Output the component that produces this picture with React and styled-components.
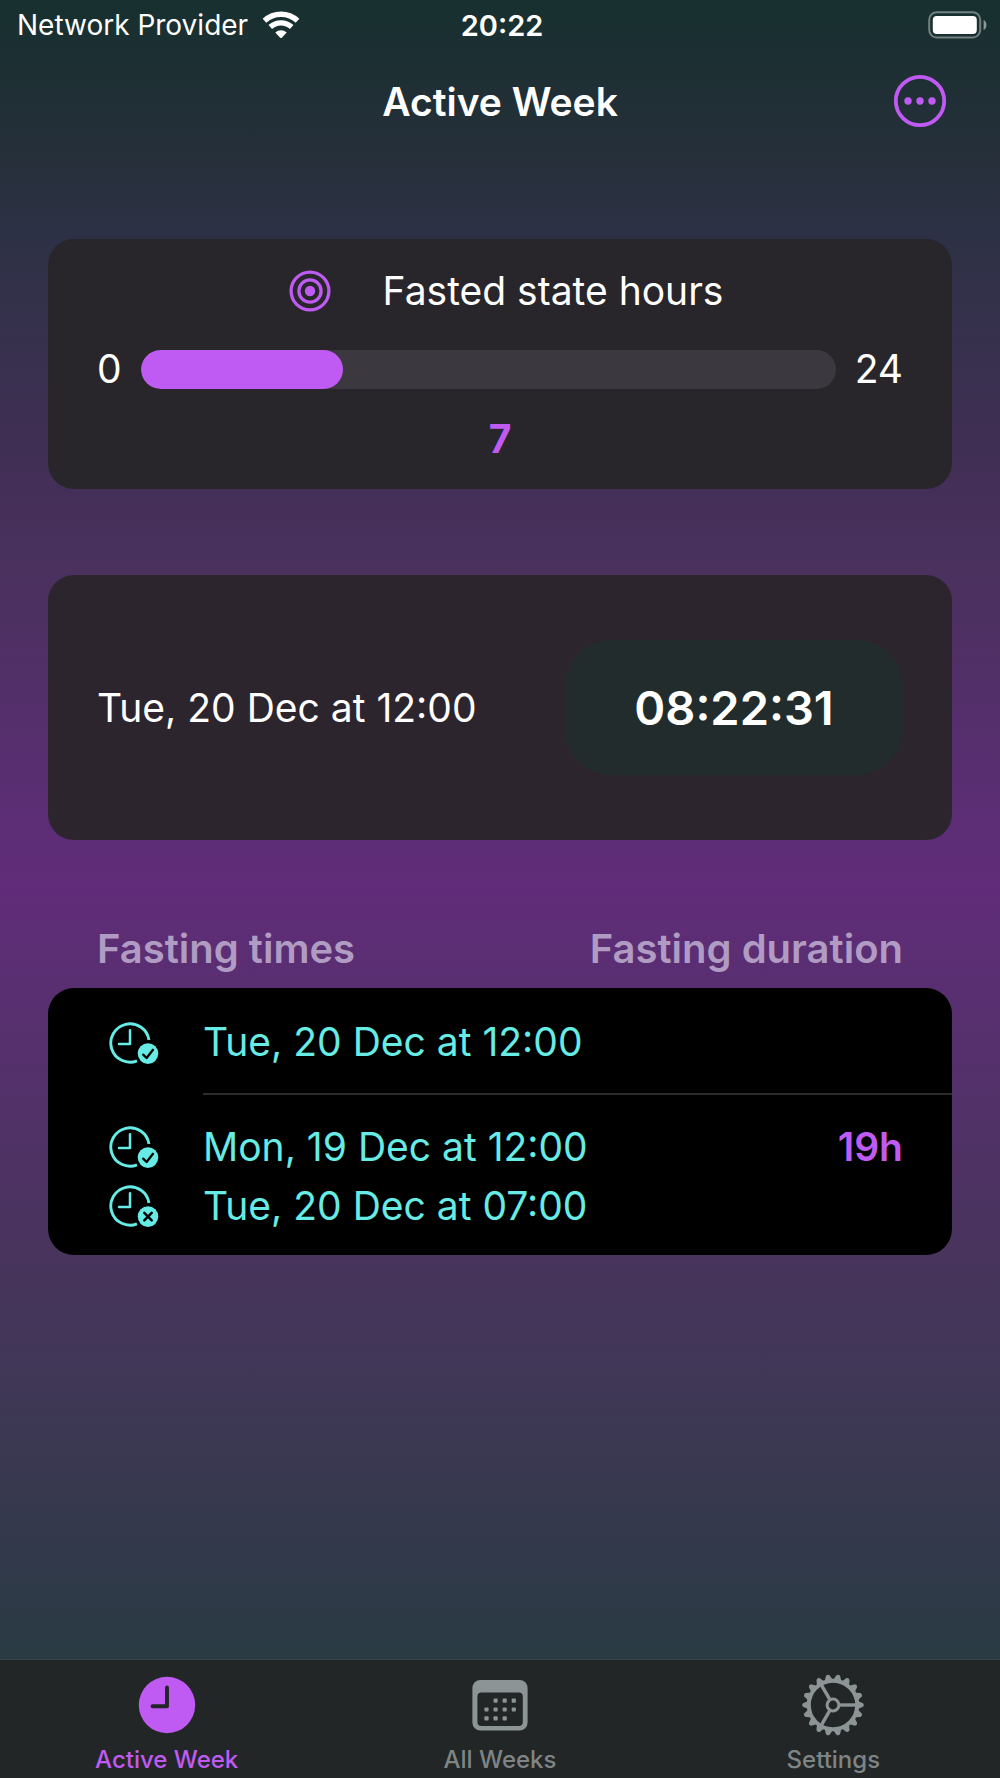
import styled, { createGlobalStyle } from 'styled-components'

const purple = "#BF5AF2"
const teal = "#66EBE5"
const dark = "#232627"
const grey = "#8D9495"

const GlobalStyle = createGlobalStyle`
    * {
        box-sizing: border-box;
    }
    body {
        margin: 0;
        background: #17302F;
        font-family: Inter, "Liberation Sans", sans-serif;
    }
    svg {
        display: block;
        flex-shrink: 0;
    }
`
const Page = styled.div`
    min-height: 100vh;
    display: flex;
    flex-direction: column;
    color: white;
    background: linear-gradient(
        #17302F 0%,
        #262F3A 9%,
        #2D3145 13%,
        #432F57 27%,
        #4A315E 32%,
        #5D2D76 47%,
        #602C79 50%,
        #5B2E73 54%,
        #49345E 70%,
        #3A3851 82%,
        #2A3B44 93%,
        #2A3B44 100%
    );
`
const StatusBar = styled.div`
    height: 50px;
    padding: 0 13px 0 17px;
    display: grid;
    grid-template-columns: 1fr auto 1fr;
    align-items: center;
    font-size: 28px;
`
const Provider = styled.div`
    display: flex;
    align-items: center;
    gap: 14px;
    white-space: nowrap;
`
const Time = styled.div`
    font-size: 29px;
    font-weight: 600;
`
const Battery = styled.div`
    display: flex;
    justify-content: flex-end;
`
const NavBar = styled.header`
    height: 102px;
    padding: 0 53px;
    display: grid;
    grid-template-columns: 1fr auto 1fr;
    align-items: center;
`
const Title = styled.h1`
    grid-column: 2;
    margin: 0;
    font-size: 39px;
    font-weight: 600;
`
const MoreButton = styled.button`
    justify-self: end;
    padding: 0;
    border: none;
    background: none;
    cursor: pointer;
`
const Content = styled.main`
    flex: 1;
    padding: 87px 48px 0;
`
const Card = styled.section`
    padding: 0 49px;
    margin-bottom: 86px;
    border-radius: 26px;
    background-color: ${props => props.$color};
`
const GoalTitle = styled.h2`
    height: 103px;
    margin: 0;
    padding-left: 12px;
    display: flex;
    align-items: center;
    justify-content: center;
    gap: 52px;
    font-size: 39px;
    font-weight: 400;
`
const GoalRow = styled.div`
    display: flex;
    align-items: center;
    gap: 19px;
    font-size: 39px;
    line-height: 54px;
`
const Track = styled.div`
    flex: 1;
    height: 39px;
    border-radius: 20px;
    overflow: hidden;
    background-color: #3B393F;
`
const Fill = styled.div`
    height: 100%;
    border-radius: 20px;
    background-color: ${purple};
`
const GoalValue = styled.div`
    height: 93px;
    padding-top: 20px;
    text-align: center;
    color: ${purple};
    font-size: 39px;
    font-weight: 700;
    line-height: 46px;
`
const TimerRow = styled.div`
    height: 265px;
    display: flex;
    align-items: center;
    justify-content: space-between;
    font-size: 39px;
`
const Timer = styled.div`
    width: 338px;
    padding: 38px 0;
    border-radius: 46px;
    background-color: #222C2C;
    text-align: center;
    font-size: 47px;
    font-weight: 600;
    line-height: 59px;
`
const Times = styled.table`
    width: 100%;
    border-spacing: 0;
    font-size: 39px;
    line-height: 59px;
    white-space: nowrap;
`
const HeadCell = styled.th`
    padding: 0 0 16px;
    font-size: 40px;
    font-weight: 600;
    line-height: 46px;
    color: #B09CC2;

    &:first-child {
        padding-left: 49px;
        text-align: left;
    }
    &:last-child {
        padding-right: 49px;
        text-align: right;
    }
`
const TimesBody = styled.tbody`
    tr:first-child td:first-child { border-top-left-radius: 26px; }
    tr:first-child td:last-child { border-top-right-radius: 26px; }
    tr:last-child td:first-child { border-bottom-left-radius: 26px; }
    tr:last-child td:last-child { border-bottom-right-radius: 26px; }
    tr:not(:last-child) td:not(:first-child) { border-bottom: 2px solid #2C2C2E; }
`
const Cell = styled.td`
    height: 107px;
    padding: 22px 0 20px;
    background-color: black;
    color: ${teal};
`
const IconCell = styled(Cell)`
    width: 155px;
    min-width: 155px;
    padding-left: 60px;
`
const DurationCell = styled(Cell)`
    padding-right: 49px;
    vertical-align: top;
    text-align: right;
    font-weight: 600;
    color: ${purple};
`
const IconLine = styled.div`
    height: 59px;
    display: flex;
    align-items: center;
`
const TabBar = styled.nav`
    height: 119px;
    display: flex;
    border-top: 1px solid #37454C;
    background-color: ${dark};
`
const Tab = styled.a`
    flex: 1;
    padding-top: 14px;
    display: flex;
    flex-direction: column;
    align-items: center;
    gap: 9px;
    color: ${props => props.$active ? purple : "#7F8485"};
    font-size: 24px;
    font-weight: 500;
    line-height: 30px;
    text-decoration: none;
`

const WifiIcon = () => (
    <svg width="38" height="28" viewBox="-19 -27.5 38 28" fill="none" stroke="white">
        <path d="M-16.5 -17.7A24.2 24.2 0 0 1 16.5 -17.7" strokeWidth="5.4" />
        <path d="M-10.7 -11.5A15.7 15.7 0 0 1 10.7 -11.5" strokeWidth="5.2" />
        <path d="M-5.7 -6A8.3 8.3 0 0 1 5.7 -6L0.8 -0.8Q0 0 -0.8 -0.8Z" fill="white" stroke="none" />
    </svg>
)

const BatteryIcon = () => (
    <svg width="59" height="28" viewBox="0 0 59 28">
        <rect x="1.2" y="1.2" width="51" height="25.4" rx="7.5" fill="none" stroke="#728180" strokeWidth="2" />
        <rect x="4.8" y="5" width="44" height="18" rx="4" fill="white" />
        <path d="M55.6 9C59.4 10.5 59.4 17.5 55.6 19Z" fill="#8F9B9B" />
    </svg>
)

const MoreIcon = () => (
    <svg width="54" height="54" viewBox="-27 -27 54 54" fill={purple}>
        <circle r="24.2" fill="none" stroke={purple} strokeWidth="3.8" />
        <circle cx="-12" r="3.7" />
        <circle r="3.7" />
        <circle cx="12" r="3.7" />
    </svg>
)

const TargetIcon = () => (
    <svg width="42" height="42" viewBox="-21 -21 42 42" fill="none" stroke={purple} strokeWidth="3.3">
        <circle r="18.9" />
        <circle r="11.1" />
        <circle r="5.2" fill={purple} stroke="none" />
    </svg>
)

const ClockIcon = ({ done }) => (
    <svg width="52" height="44" viewBox="-22 -22 52 44" fill="none" stroke={teal} strokeWidth="2.9" strokeLinecap="round" strokeLinejoin="round">
        <path d="M18.96 -3A19.2 19.2 0 1 0 7 17.88" strokeLinecap="butt" />
        <path d="M0 -12.8V1H-11" strokeWidth="2.5" />
        <circle cx="18" cy="10.6" r="10.3" fill={teal} stroke="none" />
        {done
            ? <path d="M13.2 11.6L16.6 15L23 6.8" stroke="black" strokeWidth="2.3" />
            : <path d="M14.3 6.9L21.7 14.3M21.7 6.9L14.3 14.3" stroke="black" strokeWidth="2.5" />}
    </svg>
)

const ActiveIcon = () => (
    <svg width="62" height="62" viewBox="-31 -31 62 62">
        <circle r="28.2" fill={purple} />
        <path d="M0 -17.5V1.2H-14.5" fill="none" stroke={dark} strokeWidth="3.9" strokeLinecap="round" strokeLinejoin="round" />
    </svg>
)

const days = [[1, 0], [2, 0], [3, 0], [0, 1], [1, 1], [2, 1], [3, 1], [0, 2], [1, 2], [2, 2]]

const CalendarIcon = () => (
    <svg width="62" height="62" viewBox="-3.4 -6 62 62" fill={grey}>
        <path fillRule="evenodd" d="M8 0H47.2A8 8 0 0 1 55.2 8V42.6A8 8 0 0 1 47.2 50.6H8A8 8 0 0 1 0 42.6V8A8 8 0 0 1 8 0ZM9 12.6A4 4 0 0 0 5 16.6V42A4 4 0 0 0 9 46H46.4A4 4 0 0 0 50.4 42V16.6A4 4 0 0 0 46.4 12.6Z" />
        {days.map(([x, y]) => (
            <rect key={`${x}-${y}`} x={12 + x * 9.1} y={18.5 + y * 8.9} width="4.2" height="4.2" rx="1" />
        ))}
    </svg>
)

const teeth = Array.from({ length: 18 }, (_, i) => i * 20)

const GearIcon = () => (
    <svg width="62" height="62" viewBox="-31 -31 62 62" fill={grey}>
        {teeth.map(angle => (
            <path key={angle} transform={`rotate(${angle})`} d="M24 -4.4L26 -3.6L30 -1.8Q31.6 0 30 1.8L26 3.6L24 4.4Z" />
        ))}
        <g fill="none" stroke={grey} strokeWidth="3.4">
            <circle r="24.2" strokeWidth="4" />
            <circle r="5.9" strokeWidth="3" />
            {[0, 120, 240].map(angle => (
                <path key={angle} transform={`rotate(${angle})`} d="M6.5 0H23" />
            ))}
        </g>
    </svg>
)

const goal = 7
const dayHours = 24

const fasts = [
    { start: "Tue, 20 Dec at 12:00" },
    { start: "Mon, 19 Dec at 12:00", end: "Tue, 20 Dec at 07:00", duration: "19h" },
]

const App = () => {
    return <>
        <GlobalStyle />
        <Page>
            <StatusBar>
                <Provider>Network Provider <WifiIcon /></Provider>
                <Time>20:22</Time>
                <Battery><BatteryIcon /></Battery>
            </StatusBar>
            <NavBar>
                <Title>Active Week</Title>
                <MoreButton aria-label="More"><MoreIcon /></MoreButton>
            </NavBar>
            <Content>
                <Card $color="#28262A">
                    <GoalTitle><TargetIcon />Fasted state hours</GoalTitle>
                    <GoalRow>
                        <span>0</span>
                        <Track role="progressbar" aria-label="Fasted state hours" aria-valuemin={0} aria-valuemax={dayHours} aria-valuenow={goal}>
                            <Fill style={{ width: `${goal / dayHours * 100}%` }} />
                        </Track>
                        <span>{dayHours}</span>
                    </GoalRow>
                    <GoalValue>{goal}</GoalValue>
                </Card>
                <Card $color="#2D252E">
                    <TimerRow>
                        <span>Tue, 20 Dec at 12:00</span>
                        <Timer>08:22:31</Timer>
                    </TimerRow>
                </Card>
                <Times>
                    <thead>
                        <tr>
                            <HeadCell colSpan={2}>Fasting times</HeadCell>
                            <HeadCell>Fasting duration</HeadCell>
                        </tr>
                    </thead>
                    <TimesBody>
                        {fasts.map(fast => (
                            <tr key={fast.start}>
                                <IconCell>
                                    <IconLine><ClockIcon done /></IconLine>
                                    {fast.end && <IconLine><ClockIcon /></IconLine>}
                                </IconCell>
                                <Cell>
                                    <div>{fast.start}</div>
                                    {fast.end && <div>{fast.end}</div>}
                                </Cell>
                                <DurationCell>{fast.duration}</DurationCell>
                            </tr>
                        ))}
                    </TimesBody>
                </Times>
            </Content>
            <TabBar>
                <Tab href="#active" $active><ActiveIcon />Active Week</Tab>
                <Tab href="#weeks"><CalendarIcon />All Weeks</Tab>
                <Tab href="#settings"><GearIcon />Settings</Tab>
            </TabBar>
        </Page>
    </>
}

export default App
